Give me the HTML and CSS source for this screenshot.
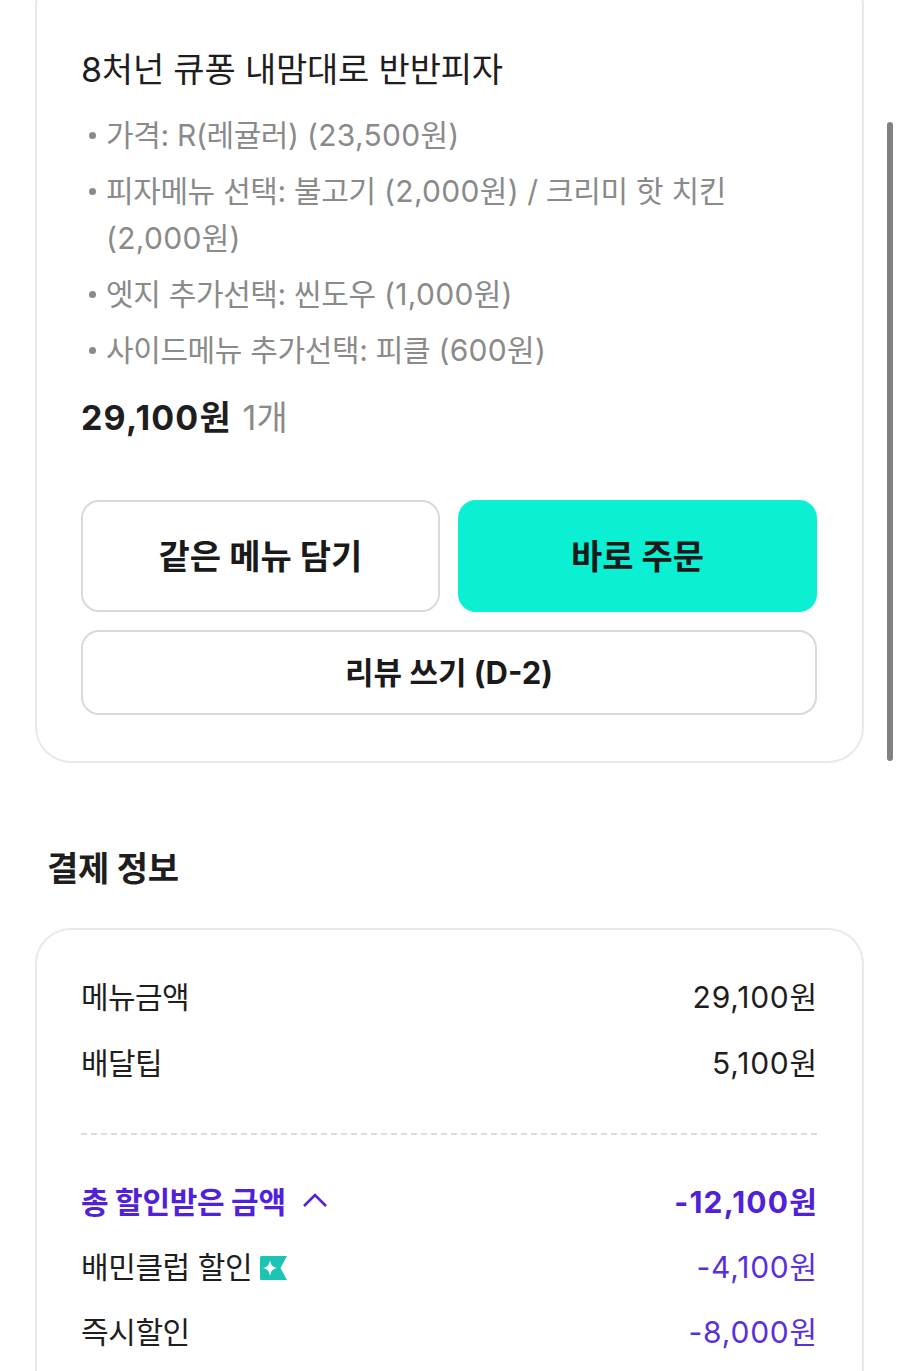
FILE: index.html
```html
<!DOCTYPE html>
<html lang="ko">
<head>
<meta charset="utf-8">
<title>주문 상세</title>
<link rel="stylesheet" href="styles.css">
</head>
<body>
<main class="page">
  <section class="card order">
    <h2 class="menu-title">8처넌 큐퐁 내맘대로 반반피자</h2>
    <ul class="options">
      <li>가격: R(레귤러) <span class="amt">(23,500원)</span></li>
      <li>피자메뉴 선택: 불고기 <span class="amt">(2,000원)</span> / 크리미 핫 치킨 <span class="amt">(2,000원)</span></li>
      <li>엣지 추가선택: 씬도우 <span class="amt">(1,000원)</span></li>
      <li>사이드메뉴 추가선택: 피클 <span class="amt">(600원)</span></li>
    </ul>
    <p class="price"><strong>29,100원</strong> <span>1개</span></p>
    <div class="actions">
      <button class="btn big">같은 메뉴 담기</button>
      <button class="btn big primary">바로 주문</button>
      <button class="btn wide">리뷰 쓰기 (D-2)</button>
    </div>
  </section>
  <h2 class="section-title">결제 정보</h2>
  <section class="card pay">
    <div class="row"><span>메뉴금액</span><span class="amt">29,100원</span></div>
    <div class="row"><span>배달팁</span><span class="amt">5,100원</span></div>
    <hr class="dash">
    <div class="row total">
      <span class="label">총 할인받은 금액
        <svg class="chev" width="26" height="14" viewBox="0 0 26 14" fill="none"><path d="M2 13 13 2l11 11" stroke="currentColor" stroke-width="2.6"/></svg>
      </span>
      <span class="amt">-12,100원</span>
    </div>
    <div class="row disc">
      <span class="label">배민클럽 할인
        <svg class="club" width="27" height="24" viewBox="0 0 27 24"><path d="M1.500 0H27l-6.500 12L27 24H1.500A1.500 1.500 0 0 1 0 22.500v-21A1.500 1.500 0 0 1 1.500 0z" fill="#1cc4b4"/><path d="M10 4c.8 4.800 2.400 7 7 8-4.600 1-6.200 3.200-7 8-.8-4.800-2.400-7-7-8 4.600-1 6.200-3.200 7-8z" fill="#fff"/></svg>
      </span>
      <span class="amt">-4,100원</span>
    </div>
    <div class="row disc"><span>즉시할인</span><span class="amt">-8,000원</span></div>
  </section>
</main>
<div class="scrollbar"></div>
</body>
</html>
```
FILE: styles.css
```css
* { box-sizing: border-box; }
html, body { margin: 0; height: 1371px; overflow: hidden; background: #fff; }
body {
  position: relative;
  color: #1e1e1e;
  font-family: Inter, "Noto Sans CJK KR", sans-serif;
}
.page { padding: 0 36px; margin-top: -30px; }
.card {
  width: 829px;
  margin-left: -1px;
  border: 2px solid #e9e9e9;
  border-radius: 36px;
  padding: 0 45px 0 44px;
}
.order { padding-top: 71px; height: 793px; }
.menu-title { margin: 0; font-size: 34px; font-weight: 400; line-height: 54px; letter-spacing: -0.2px; }
.options {
  list-style: none;
  margin: 15px 0 0;
  padding: 0 70px 0 25px;
  color: #8a8a8a;
  font-size: 30px;
  line-height: 47px;
  letter-spacing: -0.4px;
  word-spacing: 0.3px;
}
.options .amt { letter-spacing: 0.3px; }
.options li { position: relative; margin-bottom: 9px; }
.options li::before {
  content: "";
  position: absolute;
  left: -17px;
  top: 20px;
  width: 7px;
  height: 7px;
  border-radius: 50%;
  background: #8a8a8a;
}
.price { margin: 19px 0 0; font-size: 34px; line-height: 50px; }
.price strong { font-weight: 700; letter-spacing: 1.2px; margin-right: 1px; }
.price span { color: #8a8a8a; font-size: 34px; }
.actions {
  display: grid;
  grid-template-columns: 1fr 1fr;
  gap: 18px;
  margin-top: 57px;
}
.btn {
  font: inherit;
  color: #1a1a1a;
  background: #fff;
  border: 2px solid #d9d9d9;
  border-radius: 18px;
  font-weight: 700;
  padding: 0;
}
.big { height: 112px; font-size: 34px; padding-bottom: 3px; }
.primary { background: #0bf0d3; border-color: #0bf0d3; }
.wide { grid-column: 1 / -1; height: 85px; font-size: 31px; padding-bottom: 4px; }
.section-title { margin: 73px 0 0 11px; font-size: 34px; font-weight: 700; line-height: 66px; letter-spacing: -0.3px; }
.pay { margin-top: 26px; padding-top: 32px; height: 500px; }
.row {
  display: flex;
  justify-content: space-between;
  align-items: center;
  height: 66px;
  font-size: 30px;
  letter-spacing: -0.6px;
}
.row .amt { letter-spacing: 0.8px; margin-right: -1px; }
.label { display: inline-flex; align-items: center; gap: 8px; }
.dash { border: 0; border-top: 2px dashed #dcdcdc; margin: 39px 0 33px; }
.total { color: #5021d9; font-weight: 700; height: 64px; letter-spacing: -0.3px; }
.total .amt { letter-spacing: 1.2px; }
.disc { color: #1e1e1e; height: 65px; letter-spacing: -0.4px; }
.disc .amt { color: #5a2fdc; }
.chev { margin-left: 8px; }
.club { margin-top: 6px; }
.scrollbar {
  position: absolute;
  left: 887px;
  top: 122px;
  width: 6px;
  height: 639px;
  border-radius: 3px;
  background: #828282;
}
```
